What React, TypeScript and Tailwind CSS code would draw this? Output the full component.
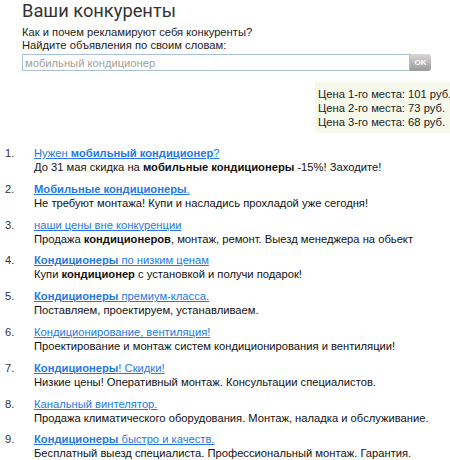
import type { ReactNode } from "react";

type Ad = {
  title: ReactNode;
  text: ReactNode;
};

const ADS: Ad[] = [
  {
    title: (
      <>
        Нужен <b>мобильный кондиционер</b>?
      </>
    ),
    text: (
      <>
        До 31 мая скидка на <b>мобильные кондиционеры</b> -15%! Заходите!
      </>
    ),
  },
  {
    title: (
      <>
        <b>Мобильные кондиционеры</b>.
      </>
    ),
    text: "Не требуют монтажа! Купи и насладись прохладой уже сегодня!",
  },
  {
    title: "наши цены вне конкуренции",
    text: (
      <>
        Продажа <b>кондиционеров</b>, монтаж, ремонт. Выезд менеджера на обьект
      </>
    ),
  },
  {
    title: (
      <>
        <b>Кондиционеры</b> по низким ценам
      </>
    ),
    text: (
      <>
        Купи <b>кондиционер</b> с установкой и получи подарок!
      </>
    ),
  },
  {
    title: (
      <>
        <b>Кондиционеры</b> премиум-класса.
      </>
    ),
    text: "Поставляем, проектируем, устанавливаем.",
  },
  {
    title: "Кондиционирование, вентиляция!",
    text: "Проектирование и монтаж систем кондиционирования и вентиляции!",
  },
  {
    title: (
      <>
        <b>Кондиционеры</b>! Скидки!
      </>
    ),
    text: "Низкие цены! Оперативный монтаж. Консультации специалистов.",
  },
  {
    title: "Канальный винтелятор.",
    text: "Продажа климатического оборудования. Монтаж, наладка и обслуживание.",
  },
  {
    title: (
      <>
        <b>Кондиционеры</b> быстро и качеств.
      </>
    ),
    text: "Бесплатный выезд специалиста. Профессиональный монтаж. Гарантия.",
  },
];

const PRICES = [
  ["1", "101"],
  ["2", "73"],
  ["3", "68"],
];

export default function App() {
  return (
    <div className="h-[460px] w-[450px] overflow-hidden bg-white font-['Liberation_Sans',Arial,sans-serif] text-[11.2px] text-[#111]">
      <div className="pl-[22px]">
        <h1 className="font-['Roboto',sans-serif] text-[18.3px] leading-[22px] text-[#333]">Ваши конкуренты</h1>
        <div className="mt-[4px] leading-[13px] text-[#222]">
          <div>Как и почем рекламируют себя конкуренты?</div>
          <div>Найдите объявления по своим словам:</div>
        </div>
        <div className="mt-[2px] flex items-center">
          <input
            className="h-[17px] w-[388px] border border-[#a9c1d9] px-[2px] text-[11.2px] text-[#999] outline-none placeholder:text-[#a0a0a0]"
            placeholder="мобильный кондиционер"
          />
          <button className="flex h-[17px] w-[21px] items-center justify-center rounded-r-[3px] bg-gradient-to-b from-[#d9d9d9] to-[#999] text-[8px] font-bold text-white">
            OK
          </button>
        </div>
      </div>

      <div className="mt-[11px] flex justify-end">
        <div className="w-[135px] whitespace-nowrap bg-[#f5f8ea] pb-[4px] pl-[3px] pt-[5px] text-[11.2px] leading-[14px] text-[#222]">
          {PRICES.map(([place, price]) => (
            <div key={place}>
              Цена {place}-го места: {price} руб.
            </div>
          ))}
        </div>
      </div>

      <ol className="mt-[13px]">
        {ADS.map((ad, i) => (
          <li key={i} className="mb-[7.8px] flex">
            <span className="w-[34px] shrink-0 pl-[5px] leading-[14px] text-[#333]">{i + 1}.</span>
            <div className="leading-[14px]">
              <a href="#" className="text-[#2479e0] underline">
                {ad.title}
              </a>
              <div className="text-[#111]">{ad.text}</div>
            </div>
          </li>
        ))}
      </ol>
    </div>
  );
}
